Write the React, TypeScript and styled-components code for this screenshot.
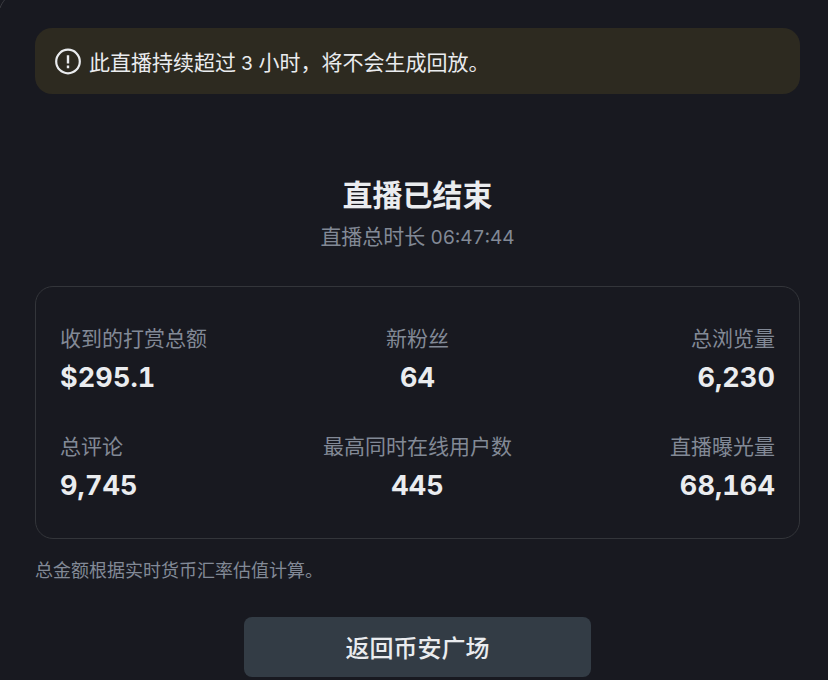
import React from "react";
import styled, { createGlobalStyle } from "styled-components";

const Global = createGlobalStyle`
  * { box-sizing: border-box; }
  body { margin: 0; background: #181920; font-family: Inter, "Noto Sans CJK SC", sans-serif; color: #eaecef; }
`;
const Page = styled.main`
  position: relative;
  height: 680px;
  overflow: hidden;
  background: #181920;
  padding: 28px 28px 0 35px;
  display: flex;
  flex-direction: column;
`;
const DialogCorner = styled.svg`
  position: absolute;
  top: 0;
  left: 0;
`;
const Notice = styled.div`
  height: 66px;
  border-radius: 17px;
  background: #2d2a20;
  display: flex;
  align-items: center;
  gap: 8px;
  padding: 0 19px;
  font-size: 21px;
  white-space: nowrap;
`;
const Digits = styled.span`
  font-size: 19px;
  font-feature-settings: "tnum";
`;
const Heading = styled.header`
  margin-top: 80px;
  text-align: center;
`;
const Title = styled.h1`
  margin: 0;
  font-size: 30px;
  line-height: 42px;
  font-weight: 700;
`;
const Duration = styled.p`
  margin: 6px 0 0;
  font-size: 21px;
  line-height: 30px;
  height: 30px;
  color: #828996;
`;
const Card = styled.section`
  margin-top: 34px;
  height: 253px;
  border: 1px solid #33353a;
  border-radius: 18px;
  padding: 37px 24px 0;
  display: grid;
  grid-template-columns: 1fr 1fr 1fr;
  grid-auto-rows: 108px;
`;
const Stat = styled.div<{ $align: string }>`
  text-align: ${(p) => p.$align};
`;
const Label = styled.div`
  font-size: 21px;
  line-height: 30px;
  color: #828996;
  white-space: nowrap;
`;
const Value = styled.div`
  font-size: 27px;
  font-feature-settings: "tnum";
  letter-spacing: 0.1px;
  line-height: 36px;
  margin-top: 6px;
  font-weight: 700;
`;
const Note = styled.p`
  margin: 19px 0 0;
  font-size: 18px;
  line-height: 26px;
  color: #828996;
`;
const Action = styled.button`
  align-self: center;
  margin-top: 33px;
  width: 347px;
  height: 60px;
  border: 0;
  border-radius: 8px;
  background: #333c45;
  color: #eaecef;
  padding: 0 0 1px;
  font: 500 24px Inter, "Noto Sans CJK SC", sans-serif;
`;

const stats = [
  ["收到的打赏总额", "$295.1", "left"],
  ["新粉丝", "64", "center"],
  ["总浏览量", "6,230", "right"],
  ["总评论", "9,745", "left"],
  ["最高同时在线用户数", "445", "center"],
  ["直播曝光量", "68,164", "right"],
];

export default function App() {
  return (
    <Page>
      <Global />
      <DialogCorner width="8" height="12" viewBox="0 0 8 12" fill="none">
        <path d="M0 8C1 5 2.5 2.5 4.5 0" stroke="#3a3b40" />
      </DialogCorner>
      <Notice>
        <svg width="27" height="27" viewBox="0 0 27 27" fill="none" stroke="#eaecef" strokeWidth="2.2">
          <circle cx="14" cy="13.5" r="11.8" />
          <path d="M14 7.2v8.2M14 17.6v2.6" strokeWidth="2.4" />
        </svg>
        <span>
          此直播持续超过<Digits> 3 </Digits>小时，将不会生成回放。
        </span>
      </Notice>
      <Heading>
        <Title>直播已结束</Title>
        <Duration>
          直播总时长<Digits> 06:47:44</Digits>
        </Duration>
      </Heading>
      <Card>
        {stats.map(([label, value, align]) => (
          <Stat key={label} $align={align}>
            <Label>{label}</Label>
            <Value>{value}</Value>
          </Stat>
        ))}
      </Card>
      <Note>总金额根据实时货币汇率估值计算。</Note>
      <Action>返回币安广场</Action>
    </Page>
  );
}
